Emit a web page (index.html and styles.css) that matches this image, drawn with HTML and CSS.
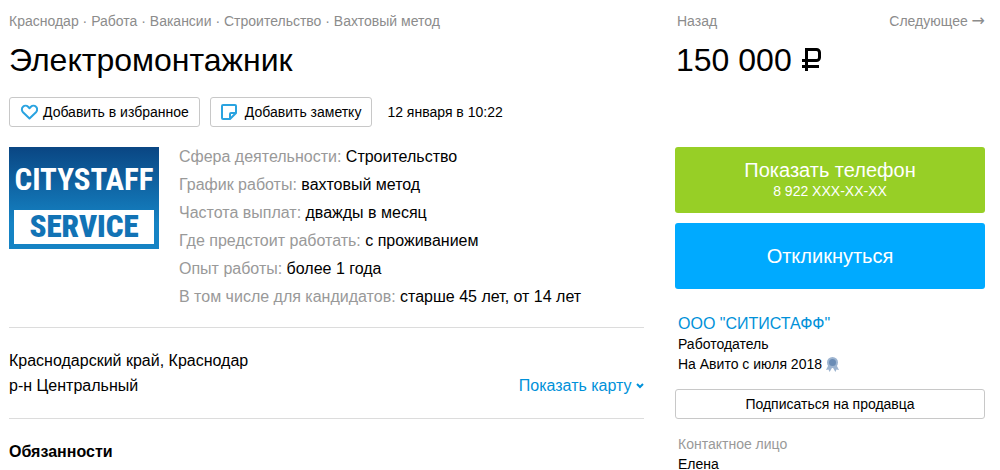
FILE: index.html
```html
<!DOCTYPE html>
<html lang="ru">
<head>
    <meta charset="UTF-8">
    <title>Электромонтажник</title>
    <link rel="stylesheet" href="styles.css">
</head>
<body>
    <div class="page">
        <main class="item">
            <nav class="breadcrumbs">
                <a href="#">Краснодар</a> ·
                <a href="#">Работа</a> ·
                <a href="#">Вакансии</a> ·
                <a href="#">Строительство</a> ·
                <a href="#">Вахтовый метод</a>
            </nav>
            <h1 class="title">Электромонтажник</h1>
            <div class="actions">
                <button type="button" class="button">
                    <svg class="icon" width="18" height="16" viewBox="0 0 18 16">
                        <path d="M9.500 14.500 3 8.200C1.500 6.600 1.500 4.200 3 2.800 4.400 1.400 6.700 1.400 8.100 2.800L9.500 4.200l1.400-1.400c1.400-1.400 3.700-1.400 5.100 0 1.500 1.400 1.500 3.800 0 5.400z"/>
                    </svg>
                    Добавить в избранное
                </button>
                <button type="button" class="button">
                    <svg class="icon icon-note" width="16" height="16" viewBox="0 0 16 16">
                        <path d="M2 1h12a1 1 0 0 1 1 1v7l-6 6H2a1 1 0 0 1-1-1V2a1 1 0 0 1 1-1zM9 15v-5a1 1 0 0 1 1-1h5"/>
                    </svg>
                    Добавить заметку
                </button>
                <span class="date">12 января в 10:22</span>
            </div>

            <div class="info">
                <a href="#" class="logo">
                    <span class="logo-name">CITYSTAFF</span>
                    <span class="logo-service">SERVICE</span>
                </a>
                <ul class="params">
                    <li><span class="label">Сфера деятельности:</span> Строительство</li>
                    <li><span class="label">График работы:</span> вахтовый метод</li>
                    <li><span class="label">Частота выплат:</span> дважды в месяц</li>
                    <li><span class="label">Где предстоит работать:</span> с проживанием</li>
                    <li><span class="label">Опыт работы:</span> более 1 года</li>
                    <li><span class="label">В том числе для кандидатов:</span> старше 45 лет, от 14 лет</li>
                </ul>
            </div>

            <div class="location">
                <div class="address">Краснодарский край, Краснодар<br>р-н Центральный</div>
                <a href="#" class="map-link">Показать карту
                    <svg class="arrow" width="8" height="6" viewBox="0 0 8 6"><path d="M1 1l3 3 3-3"/></svg>
                </a>
            </div>

            <h2 class="subtitle">Обязанности</h2>
        </main>

        <aside class="sidebar">
            <nav class="pager">
                <a href="#">Назад</a>
                <a href="#">Следующее <span class="next">→</span></a>
            </nav>
            <div class="price">150 000
                <svg class="ruble" width="21" height="23" viewBox="0 0 21 23">
                    <path d="M5.500 23V1.500H15.500a3 3 0 0 1 3 3v5a3 3 0 0 1-3 3H1M1 18.500h17"/>
                </svg>
            </div>
            <div class="contacts">
                <button type="button" class="big-button phone">
                    Показать телефон
                    <span class="number">8 922 XXX-XX-XX</span>
                </button>
                <button type="button" class="big-button respond">Откликнуться</button>
            </div>
            <div class="seller">
                <a href="#" class="seller-name">ООО "СИТИСТАФФ"</a>
                <div>Работодатель</div>
                <div class="since">На Авито с июля 2018
                    <svg width="13" height="15" viewBox="0 0 13 15">
                        <path fill="#9db4d0" d="M2.500 8 0 13l2.500-.4L3.600 15 6.500 10l2.900 5 1.100-2.400 2.500.4L10.500 8z"/>
                        <circle cx="6.500" cy="5.500" r="5.500" fill="#9db4d0"/>
                        <circle cx="6.500" cy="5.500" r="3.500" fill="#6a8cb5"/>
                    </svg>
                </div>
            </div>
            <button type="button" class="button subscribe">Подписаться на продавца</button>
            <div class="person">
                <div class="label">Контактное лицо</div>
                <div>Елена</div>
            </div>
        </aside>
    </div>
</body>
</html>
```
FILE: styles.css
```css
body {
    margin: 0;
    background: #fff;
    color: #000;
    font-family: "Liberation Sans", Arial, sans-serif;
    font-size: 14px;
    line-height: 20px;
}
a {
    color: #0091d9;
    text-decoration: none;
}
.page {
    display: grid;
    grid-template-columns: 1fr 310px;
    gap: 31px;
    padding: 11px 15px 0 9px;
}
.breadcrumbs,
.breadcrumbs a,
.pager a {
    color: #8c8c8c;
}
.title,
.price {
    margin: 11px 0 0;
    font-size: 32px;
    font-weight: normal;
    line-height: 36px;
}

/* buttons */
.actions {
    display: flex;
    align-items: center;
    gap: 10px;
    margin-top: 19px;
}
.button {
    display: flex;
    align-items: center;
    justify-content: center;
    gap: 5px;
    box-sizing: border-box;
    height: 30px;
    padding: 0 10px;
    border: 1px solid #c8c8c8;
    border-radius: 3px;
    background: #fff;
    color: #000;
    font: inherit;
    cursor: pointer;
}
.icon {
    fill: none;
    stroke: #2aa3e0;
    stroke-width: 2;
    stroke-linejoin: round;
}
.icon-note {
    margin-right: 3px;
}
.date {
    margin-left: 5px;
}

/* company and parameters */
.info {
    display: flex;
    align-items: flex-start;
    gap: 20px;
    margin-top: 20px;
    padding-bottom: 20px;
    border-bottom: 1px solid #dcdcdc;
}
.logo {
    display: flex;
    flex-direction: column;
    box-sizing: border-box;
    width: 150px;
    height: 102px;
    padding: 5px;
    background: linear-gradient(#0a4683, #1583c4 75%);
    font-family: "Roboto Condensed", Roboto, sans-serif;
    font-weight: bold;
    text-align: center;
}
.logo-name {
    flex: 1;
    color: #fff;
    font-size: 31px;
    line-height: 56px;
}
.logo-service {
    background: #fff;
    color: #1273b5;
    font-size: 31px;
    font-weight: 900;
    line-height: 34px;
}
.params {
    display: grid;
    gap: 8px;
    margin: 0;
    padding: 0;
    list-style: none;
    font-size: 16px;
}
.label {
    color: #999;
}

/* address */
.location {
    display: flex;
    align-items: flex-end;
    justify-content: space-between;
    padding: 20px 0;
    border-bottom: 1px solid #dcdcdc;
    font-size: 16px;
    line-height: 25px;
}
.arrow {
    vertical-align: 2px;
    fill: none;
    stroke: #0091d9;
    stroke-width: 2;
}
.subtitle {
    margin: 21px 0 0;
    font-size: 16px;
    line-height: 24px;
}

/* right column */
.pager {
    display: flex;
    justify-content: space-between;
    padding-left: 2px;
}
.next {
    font-family: "DejaVu Sans", sans-serif;
    font-size: 16px;
    line-height: 1;
}
.price {
    padding-left: 1px;
}
.ruble {
    fill: none;
    stroke: #000;
    stroke-width: 3;
}
.contacts {
    display: grid;
    gap: 10px;
    margin-top: 69px;
}
.big-button {
    height: 66px;
    padding: 0;
    border: 0;
    border-radius: 3px;
    color: #fff;
    font: inherit;
    font-size: 20px;
    line-height: 22px;
    cursor: pointer;
}
.phone {
    background: #97cf26;
}
.respond {
    background: #0af;
}
.number {
    display: block;
    font-size: 14px;
    line-height: 20px;
}
.seller {
    margin-top: 25px;
    padding-left: 3px;
}
.seller-name {
    font-size: 16px;
}
.since svg {
    vertical-align: -3px;
}
.subscribe {
    width: 100%;
    margin-top: 15px;
}
.person {
    margin-top: 15px;
    padding-left: 3px;
}
```
